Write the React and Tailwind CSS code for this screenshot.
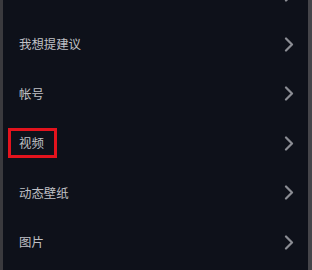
import React from 'react';

const rows = ['', '我想提建议', '帐号', '视频', '动态壁纸', '图片'];

function Chevron() {
  return (
    <svg width="10" height="15" viewBox="0 0 10 15" className="shrink-0">
      <polyline
        points="2,1.5 8,7.5 2,13.5"
        fill="none"
        stroke="#8b8d94"
        strokeWidth="2.2"
        strokeLinecap="round"
        strokeLinejoin="round"
      />
    </svg>
  );
}

export default function App() {
  return (
    <div
      className="flex w-[312px] h-[270px] overflow-hidden bg-[#0e111a]"
      style={{ fontFamily: '"Noto Sans CJK SC", "Noto Sans", sans-serif' }}
    >
      <div className="w-[3px] shrink-0 bg-[#3a3a3e]" />
      <div className="flex-1 flex flex-col mt-[-30px]">
        {rows.map((label, i) => (
          <div
            key={i}
            className="relative h-[49.5px] shrink-0 flex items-center justify-between pl-[16px] pr-[14px]"
          >
            <span className="text-[12.4px] leading-none text-[#c0c1c6]">{label}</span>
            <Chevron />
            {label === '视频' && (
              <div className="absolute left-[5px] top-[9px] w-[49px] h-[30px] border-[3px] border-[#e3131d]" />
            )}
          </div>
        ))}
      </div>
      <div className="w-[4px] shrink-0 bg-[#45454a]" />
    </div>
  );
}
